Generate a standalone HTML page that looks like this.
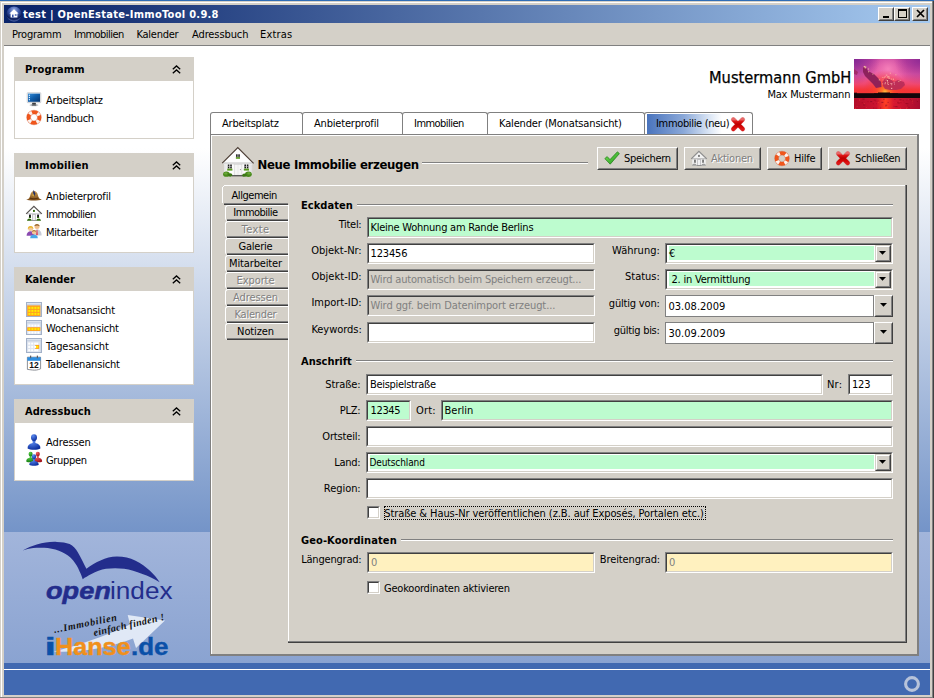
<!DOCTYPE html>
<html lang="de"><head><meta charset="utf-8"><title>test | OpenEstate-ImmoTool 0.9.8</title>
<style>
html,body{margin:0;padding:0;}
body{width:934px;height:698px;overflow:hidden;position:relative;background:#d4d0c8;font-family:"DejaVu Sans Condensed","DejaVu Sans","Liberation Sans",sans-serif;font-stretch:condensed;font-size:11px;}
body div, body span.t, body svg.a{position:absolute;box-sizing:border-box;}
.t{white-space:nowrap;display:block;}
svg{display:block;overflow:visible}
.sunk{border:1px solid;border-color:#808080 #fff #fff #808080;}
.sunk>i{position:absolute;left:0;top:0;right:0;bottom:0;border:1px solid;border-color:#404040 #d4d0c8 #d4d0c8 #404040;display:block}
.btn{background:#d4d0c8;border:1px solid;border-color:#fff #404040 #404040 #fff;}
.b2{border-color:#d4d0c8 #404040 #404040 #d4d0c8}.b2>i{border-color:#fff #808080 #808080 #fff !important}
.btn>i{position:absolute;left:0;top:0;right:0;bottom:0;border:1px solid;border-color:#d4d0c8 #808080 #808080 #d4d0c8;display:block}
</style></head><body>
<div style="left:0px;top:0px;width:934px;height:1px;background:#2f6db5"></div>
<div style="left:1px;top:2px;width:931px;height:1px;background:#fff"></div>
<div style="left:1px;top:2px;width:1px;height:695px;background:#fff"></div>
<div style="left:932px;top:1px;width:1px;height:697px;background:#808080"></div>
<div style="left:933px;top:1px;width:1px;height:697px;background:#404040"></div>
<div style="left:0px;top:697px;width:933px;height:1px;background:#808080"></div>
<div style="left:4px;top:5px;width:926px;height:18px;background:linear-gradient(90deg,#0a246a 0%,#0a246a 3%,#a6caf0 100%)"></div>
<svg class="a" style="left:6px;top:6px" width="16" height="16" viewBox="0 0 16 16"><defs><radialGradient id="g1" cx="50%" cy="25%" r="75%"><stop offset="0" stop-color="#9fb4e6"/><stop offset=".45" stop-color="#3a56a8"/><stop offset=".8" stop-color="#0c1c58"/><stop offset="1" stop-color="#5a74b8"/></radialGradient></defs>
<circle cx="8" cy="8" r="7.6" fill="url(#g1)"/>
<path d="M8 3.2 L12.6 7.6 H11.4 V11.4 H4.6 V7.6 H3.4 Z" fill="#fff"/><rect x="6" y="8.6" width="1.6" height="2.8" fill="#3a56a8"/><rect x="8.8" y="8.3" width="1.8" height="1.4" fill="#3a56a8"/></svg>
<span class="t" id="t1" style="top:8px;font-size:11px;line-height:13px;height:13px;color:#fff;font-weight:bold;letter-spacing:0.292px;left:23px;">test | OpenEstate-ImmoTool 0.9.8</span>
<div class="btn" style="left:878px;top:7px;width:16px;height:14px;"><i></i><svg class="a" style="left:3px;top:1px" width="9" height="9"><rect x="1" y="7" width="6" height="2" fill="#000"/></svg></div>
<div class="btn" style="left:894px;top:7px;width:16px;height:14px;"><i></i><svg class="a" style="left:2px;top:0px" width="11" height="11"><rect x="1.5" y="1.5" width="8" height="8" fill="none" stroke="#000"/><rect x="1" y="1" width="9" height="2" fill="#000"/></svg></div>
<div class="btn" style="left:912px;top:7px;width:16px;height:14px;"><i></i><svg class="a" style="left:3px;top:1px" width="10" height="9"><path d="M1 1 L8 8 M8 1 L1 8" stroke="#000" stroke-width="1.7"/></svg></div>
<div style="left:4px;top:45px;width:926px;height:1px;background:#808080"></div>
<span class="t" id="t2" style="top:28px;font-size:11px;line-height:13px;height:13px;color:#000;letter-spacing:-0.257px;left:12px;">Programm</span>
<span class="t" id="t3" style="top:28px;font-size:11px;line-height:13px;height:13px;color:#000;letter-spacing:-0.536px;left:74px;">Immobilien</span>
<span class="t" id="t4" style="top:28px;font-size:11px;line-height:13px;height:13px;color:#000;letter-spacing:-0.265px;left:136.5px;">Kalender</span>
<span class="t" id="t5" style="top:28px;font-size:11px;line-height:13px;height:13px;color:#000;letter-spacing:-0.106px;left:192px;">Adressbuch</span>
<span class="t" id="t6" style="top:28px;font-size:11px;line-height:13px;height:13px;color:#000;letter-spacing:0.170px;left:260px;">Extras</span>
<div style="left:4px;top:46px;width:926px;height:486px;background:linear-gradient(180deg,#ffffff 0%,#ffffff 21%,#7494c8 100%)"></div>
<div style="left:4px;top:532px;width:926px;height:131px;background:linear-gradient(180deg,#a2b5db 0%,#8aa3d1 100%)"></div>
<div style="left:4px;top:663px;width:926px;height:6px;background:#4169b1"></div>
<div style="left:4px;top:669px;width:926px;height:1px;background:#fff"></div>
<div style="left:4px;top:670px;width:926px;height:25px;background:#4169b1"></div>
<svg class="a" style="left:904px;top:676px" width="16" height="16" viewBox="0 0 16 16"><circle cx="8" cy="8" r="6.4" fill="none" stroke="#b7c3da" stroke-width="3.1"/></svg>
<div style="left:14px;top:57px;width:180px;height:24px;background:#d4d0c8"></div>
<span class="t" id="t7" style="top:63px;font-size:11px;line-height:13px;height:13px;color:#000;font-weight:bold;letter-spacing:0.200px;left:25px;">Programm</span>
<svg class="a" style="left:172px;top:65px" width="9" height="9" viewBox="0 0 9 9"><path d="M.8 4.2 L4.5 .9 L8.2 4.2 M.8 8.2 L4.5 4.9 L8.2 8.2" fill="none" stroke="#000" stroke-width="1.3"/></svg>
<div style="left:14px;top:81px;width:180px;height:58px;background:#fff;border:1px solid #d4d0c8;border-top:0"></div>
<svg class="a" style="left:26px;top:91px" width="16" height="16" viewBox="0 0 16 16"><defs><linearGradient id="g3" x1="0" y1="0" x2="1" y2="1"><stop offset="0" stop-color="#3a8fd8"/><stop offset=".45" stop-color="#1060ae"/><stop offset="1" stop-color="#06346e"/></linearGradient></defs>
<g transform="translate(0 .7)"><rect x="1.2" y="1" width="13.6" height="10" rx=".6" fill="#eef0f3" stroke="#a4aab2" stroke-width=".5"/>
<rect x="2" y="1.9" width="12" height="8.2" fill="url(#g3)"/>
<rect x="2.8" y="3" width="1.2" height="1.2" fill="#dfefff"/><rect x="2.8" y="5.2" width="1.2" height="1.2" fill="#dfefff"/><rect x="2.8" y="7.4" width="1.2" height="1.2" fill="#dfefff"/>
<path d="M6.4 11 H9.6 L10.2 12.8 H5.8 Z" fill="#3a3c40"/><ellipse cx="8" cy="13.5" rx="4.4" ry="1.1" fill="#c8ccd0"/><ellipse cx="8" cy="13.2" rx="2.6" ry=".7" fill="#2c2e32"/></g></svg>
<span class="t" id="t8" style="top:94px;font-size:11px;line-height:13px;height:13px;color:#000;letter-spacing:-0.198px;left:46px;">Arbeitsplatz</span>
<svg class="a" style="left:26px;top:109px" width="16" height="16" viewBox="0 0 16 16"><circle cx="8" cy="8.5" r="5.4" fill="none" stroke="#f0561c" stroke-width="3.9"/>
<circle cx="8" cy="8.5" r="5.4" fill="none" stroke="#fdf3ee" stroke-width="3.9" stroke-dasharray="2.9 5.58" stroke-dashoffset="-2.8"/>
<circle cx="8" cy="8.5" r="7.35" fill="none" stroke="#c8431a" stroke-width=".5" opacity=".55"/>
<circle cx="8" cy="8.5" r="3.45" fill="none" stroke="#c8431a" stroke-width=".5" opacity=".55"/></svg>
<span class="t" id="t9" style="top:112px;font-size:11px;line-height:13px;height:13px;color:#000;letter-spacing:-0.318px;left:46px;">Handbuch</span>
<div style="left:14px;top:153px;width:180px;height:24px;background:#d4d0c8"></div>
<span class="t" id="t10" style="top:159px;font-size:11px;line-height:13px;height:13px;color:#000;font-weight:bold;letter-spacing:0.167px;left:25px;">Immobilien</span>
<svg class="a" style="left:172px;top:161px" width="9" height="9" viewBox="0 0 9 9"><path d="M.8 4.2 L4.5 .9 L8.2 4.2 M.8 8.2 L4.5 4.9 L8.2 8.2" fill="none" stroke="#000" stroke-width="1.3"/></svg>
<div style="left:14px;top:177px;width:180px;height:76px;background:#fff;border:1px solid #d4d0c8;border-top:0"></div>
<svg class="a" style="left:26px;top:187px" width="16" height="16" viewBox="0 0 16 16"><defs><linearGradient id="g4" x1="0" y1="0" x2="0" y2="1"><stop offset="0" stop-color="#c99a52"/><stop offset="1" stop-color="#7a4a16"/></linearGradient></defs>
<path d="M.2 12.6 C3 12.2 3.6 10.6 4.2 8.4 C4.8 5.8 6 4 8 4 C10.2 4 11.4 5.8 12 8.4 C12.6 10.6 13.2 12.2 15.9 12.4 C13 13.8 3 14 .2 12.6 Z" fill="url(#g4)"/>
<path d="M4.2 10.6 C6.6 11.4 9.6 11.4 12.2 10.4 L12.6 11.6 C9.8 12.6 6.4 12.6 3.8 11.8 Z" fill="#5a3410"/>
<path d="M7.6 2.8 L9.4 6.8 L8 9.6 L7 6.4 Z" fill="#1c2c6c"/><path d="M7.2 6 L8 9.4 L6.4 8.4 Z" fill="#e8c040"/></svg>
<span class="t" id="t11" style="top:190px;font-size:11px;line-height:13px;height:13px;color:#000;letter-spacing:-0.183px;left:46px;">Anbieterprofil</span>
<svg class="a" style="left:26px;top:205px" width="16" height="16" viewBox="0 0 16 16"><path d="M7.9 1.6 L15 8.7 H.8 Z" fill="#ffffff"/><rect x="1.3" y="8.7" width="13.4" height="7" fill="#ffffff"/>
<rect x="1" y="8.3" width="14" height="1" fill="#c4c4c8"/>
<path d="M.2 8.9 L7.9 1.3 L15.8 8.9" fill="none" stroke="#585452" stroke-width="1.25"/>
<rect x="7" y="4.9" width="1.9" height="2" fill="#2f6a0c"/>
<rect x="3" y="9.6" width="1.9" height="2.4" fill="#18181c"/><rect x="2.9" y="12" width="2.1" height="1.1" fill="#2f6a0c"/>
<rect x="11.1" y="9.6" width="1.9" height="2.4" fill="#18181c"/><rect x="11" y="12" width="2.1" height="1.1" fill="#2f6a0c"/>
<rect x="6.4" y="9.7" width="3.3" height="5.6" fill="#f0f0f2" stroke="#a8a8ac" stroke-width=".6"/>
<path d="M1 15.7 C1.2 13.6 3.4 13.3 4.4 14 C5 14 5.6 14.6 5.8 15.7 Z M10.2 15.7 C10.4 14.6 11 14 11.6 14 C12.6 13.3 14.8 13.6 15 15.7 Z" fill="#2f6a0c"/>
<rect x="5.6" y="15.3" width="5" height=".6" fill="#707070"/></svg>
<span class="t" id="t12" style="top:208px;font-size:11px;line-height:13px;height:13px;color:#000;letter-spacing:-0.536px;left:46px;">Immobilien</span>
<svg class="a" style="left:26px;top:223px" width="16" height="16" viewBox="0 0 16 16"><circle cx="11" cy="3.6" r="2.5" fill="#f0c090"/><path d="M8.4 3 C8.6 .8 13.4 .8 13.6 3.2 C12.6 2.2 9.6 2.2 8.4 3 Z" fill="#8a5a20"/>
<path d="M7.4 12.6 C7.4 8.6 8.8 6.6 11 6.6 C13.6 6.6 15.6 8.4 15.6 12.6 Z" fill="#c8ccd8"/><path d="M10.6 6.8 L11.4 6.8 L11.8 11.4 L11 12.4 L10.2 11.4 Z" fill="#e04050"/>
<circle cx="4.6" cy="5.4" r="2.5" fill="#f4c898"/><path d="M1.8 6.4 C1.4 2 7.6 2 7.4 6.2 C6.6 4.2 3 4 1.8 6.4 Z" fill="#e8b830"/>
<path d="M.6 12.8 C.6 9.8 2.4 8.2 4.6 8.2 C6.8 8.2 8.4 9.8 8.4 12.8 Z" fill="#8a4ab0"/>
<circle cx="8" cy="9.4" r="2.1" fill="#f4c898"/><path d="M5.8 9.2 C6 6.4 10 6.4 10.2 9.2 C9.4 8 6.8 8 5.8 9.2 Z" fill="#b07830"/>
<path d="M4.2 15.2 C4.2 12.8 5.8 11.8 8 11.8 C10.2 11.8 11.8 12.8 11.8 15.2 Z" fill="#48a8e8"/></svg>
<span class="t" id="t13" style="top:226px;font-size:11px;line-height:13px;height:13px;color:#000;letter-spacing:-0.243px;left:46px;">Mitarbeiter</span>
<div style="left:14px;top:267px;width:180px;height:24px;background:#d4d0c8"></div>
<span class="t" id="t14" style="top:273px;font-size:11px;line-height:13px;height:13px;color:#000;font-weight:bold;letter-spacing:-0.048px;left:25px;">Kalender</span>
<svg class="a" style="left:172px;top:275px" width="9" height="9" viewBox="0 0 9 9"><path d="M.8 4.2 L4.5 .9 L8.2 4.2 M.8 8.2 L4.5 4.9 L8.2 8.2" fill="none" stroke="#000" stroke-width="1.3"/></svg>
<div style="left:14px;top:291px;width:180px;height:94px;background:#fff;border:1px solid #d4d0c8;border-top:0"></div>
<svg class="a" style="left:26px;top:301px" width="16" height="16" viewBox="0 0 16 16"><rect x=".5" y="1.5" width="15" height="14" fill="#c9d3e3" stroke="#a3b1c8" stroke-width="1"/><rect x="1" y="2" width="14" height="1" fill="#dde4ef"/><rect x="1.2" y="4.4" width="13.2" height="10.6" fill="#ffa020"/><rect x="2.4" y="5.9" width="2" height="2" fill="#ffee00"/><rect x="5.4" y="5.9" width="2" height="2" fill="#ffee00"/><rect x="8.4" y="5.9" width="2" height="2" fill="#ffee00"/><rect x="11.4" y="5.9" width="2" height="2" fill="#ffee00"/><rect x="2.4" y="8.9" width="2" height="2" fill="#ffee00"/><rect x="5.4" y="8.9" width="2" height="2" fill="#ffee00"/><rect x="8.4" y="8.9" width="2" height="2" fill="#ffee00"/><rect x="11.4" y="8.9" width="2" height="2" fill="#ffee00"/><rect x="2.4" y="11.9" width="2" height="2" fill="#ffee00"/><rect x="5.4" y="11.9" width="2" height="2" fill="#ffee00"/><rect x="8.4" y="11.9" width="2" height="2" fill="#ffee00"/><rect x="11.4" y="11.9" width="2" height="2" fill="#ffee00"/></svg>
<span class="t" id="t15" style="top:304px;font-size:11px;line-height:13px;height:13px;color:#000;letter-spacing:-0.232px;left:46px;">Monatsansicht</span>
<svg class="a" style="left:26px;top:319px" width="16" height="16" viewBox="0 0 16 16"><rect x=".5" y="1.5" width="15" height="14" fill="#c9d3e3" stroke="#a3b1c8" stroke-width="1"/><rect x="1" y="2" width="14" height="1" fill="#dde4ef"/><rect x="1.2" y="4.4" width="13.2" height="10.6" fill="#dfe5f0"/><rect x="1.2" y="8.2" width="13.2" height="3.8" fill="#ffa020"/><rect x="2.4" y="5.6" width="2" height="2" fill="#ffffff"/><rect x="5.4" y="5.6" width="2" height="2" fill="#ffffff"/><rect x="8.4" y="5.6" width="2" height="2" fill="#ffffff"/><rect x="11.4" y="5.6" width="2" height="2" fill="#ffffff"/><rect x="2.4" y="9.1" width="2" height="2" fill="#ffee00"/><rect x="5.4" y="9.1" width="2" height="2" fill="#ffee00"/><rect x="8.4" y="9.1" width="2" height="2" fill="#ffee00"/><rect x="11.4" y="9.1" width="2" height="2" fill="#ffee00"/><rect x="2.4" y="12.6" width="2" height="2" fill="#ffffff"/><rect x="5.4" y="12.6" width="2" height="2" fill="#ffffff"/><rect x="8.4" y="12.6" width="2" height="2" fill="#ffffff"/><rect x="11.4" y="12.6" width="2" height="2" fill="#ffffff"/></svg>
<span class="t" id="t16" style="top:322px;font-size:11px;line-height:13px;height:13px;color:#000;letter-spacing:-0.178px;left:46px;">Wochenansicht</span>
<svg class="a" style="left:26px;top:337px" width="16" height="16" viewBox="0 0 16 16"><rect x=".5" y="1.5" width="15" height="14" fill="#c9d3e3" stroke="#a3b1c8" stroke-width="1"/><rect x="1" y="2" width="14" height="1" fill="#dde4ef"/><rect x="1.2" y="4.4" width="13.2" height="10.6" fill="#dfe5f0"/><rect x="9.2" y="7.9" width="4" height="4" fill="#ffa020"/><rect x="2.2" y="5.6" width="2" height="2" fill="#ffffff"/><rect x="5.2" y="5.6" width="2" height="2" fill="#ffffff"/><rect x="8.2" y="5.6" width="2" height="2" fill="#ffffff"/><rect x="10.2" y="5.6" width="2" height="2" fill="#ffffff"/><rect x="2.2" y="8.899999999999999" width="2" height="2" fill="#ffffff"/><rect x="5.2" y="8.899999999999999" width="2" height="2" fill="#ffffff"/><rect x="8.2" y="8.899999999999999" width="2" height="2" fill="#ffffff"/><rect x="10.2" y="8.9" width="2" height="2" fill="#ffee00"/><rect x="2.2" y="12.2" width="2" height="2" fill="#ffffff"/><rect x="5.2" y="12.2" width="2" height="2" fill="#ffffff"/><rect x="8.2" y="12.2" width="2" height="2" fill="#ffffff"/><rect x="10.2" y="12.2" width="2" height="2" fill="#ffffff"/></svg>
<span class="t" id="t17" style="top:340px;font-size:11px;line-height:13px;height:13px;color:#000;letter-spacing:-0.071px;left:46px;">Tagesansicht</span>
<svg class="a" style="left:26px;top:355px" width="16" height="16" viewBox="0 0 16 16"><path d="M1.4 2.2 H14.6 V13.8 C12 15 9 15.4 6.4 15 L1.4 14.4 Z" fill="#fff" stroke="#70747c" stroke-width=".8"/>
<rect x="1.4" y="2.2" width="13.2" height="3.6" fill="#2f8ee0"/><rect x="4" y=".6" width="1.2" height="2.6" fill="#5a5e66"/><rect x="10.8" y=".6" width="1.2" height="2.6" fill="#5a5e66"/>
<text x="8" y="13.2" font-size="8.5" font-weight="bold" font-family="Liberation Sans,sans-serif" text-anchor="middle" fill="#111">12</text></svg>
<span class="t" id="t18" style="top:358px;font-size:11px;line-height:13px;height:13px;color:#000;letter-spacing:-0.172px;left:46px;">Tabellenansicht</span>
<div style="left:14px;top:399px;width:180px;height:24px;background:#d4d0c8"></div>
<span class="t" id="t19" style="top:405px;font-size:11px;line-height:13px;height:13px;color:#000;font-weight:bold;letter-spacing:0.063px;left:25px;">Adressbuch</span>
<svg class="a" style="left:172px;top:407px" width="9" height="9" viewBox="0 0 9 9"><path d="M.8 4.2 L4.5 .9 L8.2 4.2 M.8 8.2 L4.5 4.9 L8.2 8.2" fill="none" stroke="#000" stroke-width="1.3"/></svg>
<div style="left:14px;top:423px;width:180px;height:58px;background:#fff;border:1px solid #d4d0c8;border-top:0"></div>
<svg class="a" style="left:26px;top:433px" width="16" height="16" viewBox="0 0 16 16"><defs><radialGradient id="g5" cx="35%" cy="25%" r="80%"><stop offset="0" stop-color="#5a8af0"/><stop offset="1" stop-color="#0a2c9c"/></radialGradient></defs>
<path d="M6.4 6.6 L6.7 10.1 C3.0 10.8 1.4000000000000004 13.0 1.5999999999999996 15.4 C4.0 17.2 12.0 17.2 14.4 15.4 C14.6 13.0 13.0 10.8 9.3 10.1 L9.6 6.6 Z" fill="url(#g5)"/>
<ellipse cx="8" cy="4.6" rx="3.0" ry="3.3600000000000003" fill="url(#g5)"/></svg>
<span class="t" id="t20" style="top:436px;font-size:11px;line-height:13px;height:13px;color:#000;letter-spacing:-0.082px;left:46px;">Adressen</span>
<svg class="a" style="left:26px;top:451px" width="16" height="16" viewBox="0 0 16 16"><defs><radialGradient id="g6" cx="35%" cy="25%" r="80%"><stop offset="0" stop-color="#58d048"/><stop offset="1" stop-color="#127a10"/></radialGradient></defs>
<path d="M3.5119999999999996 4.4 L3.7159999999999993 6.78 C1.1999999999999993 7.256 0.11199999999999921 8.752 0.24799999999999933 10.384 C1.8799999999999994 11.608 7.32 11.608 8.952 10.384 C9.088000000000001 8.752 8.0 7.256 5.484 6.78 L5.688 4.4 Z" fill="url(#g6)"/>
<ellipse cx="4.6" cy="3.04" rx="2.04" ry="2.2848" fill="url(#g6)"/><defs><radialGradient id="g7" cx="35%" cy="25%" r="80%"><stop offset="0" stop-color="#f06060"/><stop offset="1" stop-color="#a01018"/></radialGradient></defs>
<path d="M10.712 4.4 L10.916 6.78 C8.4 7.256 7.312 8.752 7.448 10.384 C9.08 11.608 14.520000000000001 11.608 16.152 10.384 C16.288 8.752 15.200000000000001 7.256 12.684000000000001 6.78 L12.888000000000002 4.4 Z" fill="url(#g7)"/>
<ellipse cx="11.8" cy="3.04" rx="2.04" ry="2.2848" fill="url(#g7)"/><defs><radialGradient id="g8" cx="35%" cy="25%" r="80%"><stop offset="0" stop-color="#5a8af0"/><stop offset="1" stop-color="#0a2c9c"/></radialGradient></defs>
<path d="M6.816 7.300000000000001 L7.038 9.89 C4.3 10.408000000000001 3.1160000000000005 12.036000000000001 3.2640000000000002 13.812000000000001 C5.04 15.144 10.96 15.144 12.736 13.812000000000001 C12.884 12.036000000000001 11.7 10.408000000000001 8.962 9.89 L9.184 7.300000000000001 Z" fill="url(#g8)"/>
<ellipse cx="8" cy="5.82" rx="2.2199999999999998" ry="2.4864" fill="url(#g8)"/></svg>
<span class="t" id="t21" style="top:454px;font-size:11px;line-height:13px;height:13px;color:#000;letter-spacing:-0.308px;left:46px;">Gruppen</span>
<svg class="a" style="left:14px;top:536px" width="180" height="125" viewBox="0 0 180 125"><path d="M8.6 14.5 C13 12 18 9.8 22.8 8.5 C30 6.5 36 5.6 42.9 5.9 C48 6 52 6.6 55.6 8.1 C59 10 62 13 63.8 16.3 C67 22 70 28 72.4 32.7 C77 29 82 26.5 86.5 24.5 C92 22 97 20.6 102.9 20.5 C110 20.5 116 22 121.1 24.5 C127 27.5 132 31 135.7 34.5 C140 38.5 143 42 145.7 46.3 C140 43 134 40 128.4 38.1 C122 35.5 116 33.5 110.2 32.7 C104 32 98 32 92 32.7 C87 33.5 82 35.5 77.4 38.1 C74 40 71 41.5 68.7 43.2 C68 41 67 38 65.6 35.4 C64 31.5 62 28 59.2 24.5 C56 20.5 52 18 48.3 16.3 C44 14 39 12.8 33.8 12.1 C29 11.6 24 11.6 19.2 12.1 C15 12.6 12 13.4 8.6 14.5 Z" fill="#232d8c"/>
<path d="M39.5 115.5 C60 111 90 100.5 116 88.5 L113.7 79 L151 84.5 L122 112 L119 102.5 C95 112 65 117 39.5 115.5 Z" fill="#e9f0f9" opacity=".9"/>
</svg>
<span class="t" id="t22" style="top:-6px;font-size:23px;line-height:26px;height:26px;color:#232d8c;font-weight:bold;transform-origin:0 50%;transform:scaleX(1.1829);left:0px;top:578px;left:45.5px;font-style:italic;-webkit-text-stroke:.5px #232d8c;font-family:Liberation Sans,sans-serif;">open</span>
<span class="t" id="t23" style="top:-6px;font-size:23px;line-height:26px;height:26px;color:#232d8c;transform-origin:0 50%;transform:scaleX(1.1367);left:0px;top:578px;left:109.8px;font-family:Liberation Sans,sans-serif;">index</span>
<span class="t" id="t24" style="top:-6px;font-size:23px;line-height:26px;height:26px;color:#0a50a8;font-weight:bold;transform-origin:0 50%;transform:scaleX(1.6429);left:0px;top:634px;left:44.5px;-webkit-text-stroke:.6px #0a50a8;font-family:Liberation Sans,sans-serif;">i</span>
<span class="t" id="t25" style="top:-6px;font-size:23px;line-height:26px;height:26px;color:#f0901c;font-weight:bold;transform-origin:0 50%;transform:scaleX(1.0935);left:0px;top:634px;left:55px;-webkit-text-stroke:.4px #f0901c;font-family:Liberation Sans,sans-serif;">Hanse</span>
<span class="t" id="t26" style="top:-6px;font-size:23px;line-height:26px;height:26px;color:#0a50a8;font-weight:bold;transform-origin:0 50%;transform:scaleX(1.1284);left:0px;top:634px;left:130.5px;-webkit-text-stroke:.4px #0a50a8;font-family:Liberation Sans,sans-serif;">.de</span>
<span class="t" id="t27" style="top:-2px;font-size:10px;line-height:12px;height:12px;color:#111;font-weight:bold;letter-spacing:0.731px;left:0px;top:624px;left:55px;transform:rotate(-11.5deg);font-style:italic;font-family:Liberation Serif,serif;transform-origin:0 100%;">...Immobilien</span>
<span class="t" id="t28" style="top:-2px;font-size:10px;line-height:12px;height:12px;color:#111;font-weight:bold;letter-spacing:0.383px;left:0px;top:627px;left:95px;transform:rotate(-13deg);font-style:italic;font-family:Liberation Serif,serif;transform-origin:0 100%;">einfach finden !</span>
<span class="t" id="t29" style="top:69px;font-size:15px;line-height:18px;height:18px;color:#000;transform-origin:0 50%;transform:scaleX(1.0834);left:708.7px;-webkit-text-stroke:.25px #000;">Mustermann GmbH</span>
<span class="t" id="t30" style="top:88px;font-size:11px;line-height:13px;height:13px;color:#000;letter-spacing:-0.205px;right:83.805px;">Max Mustermann</span>
<svg class="a" style="left:854px;top:59px" width="66" height="50" viewBox="0 0 66 50"><defs>
<linearGradient id="sk" x1="0" y1="0" x2="0" y2="1"><stop offset="0" stop-color="#c0409e"/><stop offset=".3" stop-color="#ea5ca4"/><stop offset=".5" stop-color="#f04870"/><stop offset=".62" stop-color="#f53538"/><stop offset="1" stop-color="#f03028"/></linearGradient>
<radialGradient id="sun" gradientUnits="userSpaceOnUse" cx="31" cy="33" r="22"><stop offset="0" stop-color="#ffc040"/><stop offset=".14" stop-color="#ff7a28"/><stop offset=".4" stop-color="#ff4828" stop-opacity=".75"/><stop offset="1" stop-color="#f03030" stop-opacity="0"/></radialGradient>
<radialGradient id="ray" gradientUnits="userSpaceOnUse" cx="34" cy="10" r="20"><stop offset="0" stop-color="#f884bc" stop-opacity=".9"/><stop offset="1" stop-color="#f070b0" stop-opacity="0"/></radialGradient>
<radialGradient id="cor" gradientUnits="userSpaceOnUse" cx="0" cy="0" r="26"><stop offset="0" stop-color="#7a2492" stop-opacity=".9"/><stop offset="1" stop-color="#7a2492" stop-opacity="0"/></radialGradient><radialGradient id="cor2" gradientUnits="userSpaceOnUse" cx="66" cy="0" r="26"><stop offset="0" stop-color="#8a2894" stop-opacity=".9"/><stop offset="1" stop-color="#8a2894" stop-opacity="0"/></radialGradient>
<linearGradient id="wt" x1="0" y1="0" x2="1" y2="0"><stop offset="0" stop-color="#b40e2a"/><stop offset=".34" stop-color="#cc1430"/><stop offset=".48" stop-color="#ff4024"/><stop offset=".6" stop-color="#d81830"/><stop offset="1" stop-color="#a80c30"/></linearGradient>
</defs>
<rect width="66" height="50" fill="url(#sk)"/><rect width="66" height="34" fill="url(#ray)"/><rect width="66" height="34" fill="url(#cor)"/><rect width="66" height="34" fill="url(#cor2)"/><rect width="66" height="40" fill="url(#sun)"/>
<path d="M9 8 L12 8.5 L14 12 L20 15 L24 19 L27 23 L27.5 28 L22 29 L19 25 L15 21 L11 17 L9 13 Z" fill="#8a2058" opacity=".95"/>
<path d="M28.5 23 L31 19.5 L36 20 L40 23 L44 21 L50 23 L51 26 L47 30 L42 31 L36 31 L31 30 L29 27 Z" fill="#b42a58" opacity=".85"/>
<path d="M0 10 L4 13 L3 16 L0 15 Z" fill="#a02860" opacity=".85"/>
<rect x="32.5" y="15.7" width="1" height="1" fill="#ffc0b0" opacity="0.53"/><rect x="36.7" y="19.6" width="1" height="1" fill="#ffc0b0" opacity="0.91"/><rect x="34.4" y="17.3" width="1" height="1" fill="#ffe8c0" opacity="0.69"/><rect x="30.5" y="24.3" width="1" height="1" fill="#ffc0b0" opacity="0.76"/><rect x="31.8" y="15.6" width="1" height="1" fill="#ffc0b0" opacity="0.76"/><rect x="37.2" y="25.3" width="1" height="1" fill="#ffc0b0" opacity="0.76"/><rect x="38.8" y="19.7" width="1" height="1" fill="#ffe8c0" opacity="0.82"/><rect x="37.3" y="24.1" width="1" height="1" fill="#ffb4c0" opacity="0.81"/><rect x="34.6" y="18.7" width="1" height="1" fill="#ffe8c0" opacity="0.92"/><rect x="33.2" y="17.5" width="1" height="1" fill="#ffd8a0" opacity="0.81"/><rect x="30.9" y="23.3" width="1" height="1" fill="#ffe8c0" opacity="0.72"/><rect x="32.9" y="21.1" width="1" height="1" fill="#ffe8c0" opacity="0.94"/><rect x="28.4" y="20.5" width="1" height="1" fill="#ff9a90" opacity="0.57"/><rect x="35.8" y="13.7" width="1" height="1" fill="#ffc0b0" opacity="0.84"/><rect x="37.5" y="28.8" width="1" height="1" fill="#ff9a90" opacity="0.65"/><rect x="33.0" y="21.9" width="1" height="1" fill="#ffb4c0" opacity="0.53"/><rect x="27.9" y="17.9" width="1" height="1" fill="#ffc0b0" opacity="0.53"/><rect x="40.0" y="24.6" width="1" height="1" fill="#ffb4c0" opacity="0.63"/><rect x="33.7" y="25.0" width="1" height="1" fill="#ffc0b0" opacity="0.92"/><rect x="33.1" y="24.0" width="1" height="1" fill="#ffb4c0" opacity="0.53"/><rect x="41.4" y="15.3" width="1" height="1" fill="#ffd8a0" opacity="0.68"/><rect x="44.3" y="21.9" width="1" height="1" fill="#ffd8a0" opacity="0.70"/><rect x="37.0" y="28.9" width="1" height="1" fill="#ffb4c0" opacity="0.89"/><rect x="31.6" y="20.5" width="1" height="1" fill="#ff9a90" opacity="0.81"/><rect x="33.6" y="17.2" width="1" height="1" fill="#ffc0b0" opacity="0.58"/><rect x="30.6" y="17.2" width="1" height="1" fill="#ffb4c0" opacity="0.87"/><rect x="29.6" y="18.1" width="1" height="1" fill="#ffd8a0" opacity="0.69"/><rect x="33.4" y="23.2" width="1" height="1" fill="#ffd8a0" opacity="0.81"/><rect x="36.3" y="24.1" width="1" height="1" fill="#ffc0b0" opacity="0.71"/><rect x="39.6" y="23.1" width="1" height="1" fill="#ffb4c0" opacity="0.68"/><rect x="28.1" y="24.4" width="1" height="1" fill="#ffc0b0" opacity="0.59"/><rect x="45.7" y="20.9" width="1" height="1" fill="#ffc0b0" opacity="0.65"/><rect x="10.6" y="8.3" width="1" height="1" fill="#ffd0a0" opacity=".85"/><rect x="10.2" y="7.1" width="1" height="1" fill="#ffd0a0" opacity=".85"/><rect x="10.9" y="8.3" width="1" height="1" fill="#ffd0a0" opacity=".85"/><rect x="14.1" y="12.3" width="1" height="1" fill="#ffd0a0" opacity=".85"/><rect x="24.8" y="20.4" width="1" height="1" fill="#ffd0a0" opacity=".85"/><rect x="9.6" y="7.4" width="1" height="1" fill="#ffd0a0" opacity=".85"/><rect x="13.9" y="9.5" width="1" height="1" fill="#ffd0a0" opacity=".85"/><rect x="10.3" y="6.9" width="1" height="1" fill="#ffd0a0" opacity=".85"/><rect x="11.4" y="7.6" width="1" height="1" fill="#ffd0a0" opacity=".85"/><rect x="18.4" y="14.6" width="1" height="1" fill="#ffd0a0" opacity=".85"/>
<rect y="34.2" width="66" height="5" fill="#12050a"/><rect x="24" y="33.5" width="12" height="1.4" fill="#12050a"/><rect x="0" y="33.7" width="3" height="1" fill="#12050a"/><rect x="20" y="34" width="24" height=".6" fill="#12050a"/>
<rect y="39.2" width="66" height="10.8" fill="url(#wt)"/><rect x="45.3" y="42.0" width="1" height="1" fill="#e02838" opacity=".6"/><rect x="23.1" y="41.6" width="2" height="1" fill="#b00c28" opacity=".6"/><rect x="21.4" y="41.6" width="1" height="1" fill="#96081e" opacity=".6"/><rect x="53.2" y="46.5" width="1" height="1" fill="#96081e" opacity=".6"/><rect x="33.6" y="42.9" width="1" height="1" fill="#7a0820" opacity=".6"/><rect x="51.4" y="44.0" width="2" height="1" fill="#96081e" opacity=".6"/><rect x="39.3" y="42.8" width="1" height="1" fill="#e02838" opacity=".6"/><rect x="5.2" y="40.5" width="1" height="1" fill="#ff4a38" opacity=".6"/><rect x="22.0" y="44.1" width="1" height="1" fill="#b00c28" opacity=".6"/><rect x="31.2" y="45.7" width="2" height="1" fill="#7a0820" opacity=".6"/><rect x="7.8" y="43.2" width="1" height="1" fill="#96081e" opacity=".6"/><rect x="57.8" y="43.6" width="1" height="1" fill="#e02838" opacity=".6"/><rect x="52.1" y="48.7" width="1" height="1" fill="#ff4a38" opacity=".6"/><rect x="26.1" y="48.5" width="1" height="1" fill="#96081e" opacity=".6"/><rect x="64.6" y="39.8" width="1" height="1" fill="#b00c28" opacity=".6"/><rect x="52.4" y="40.9" width="1" height="1" fill="#b00c28" opacity=".6"/><rect x="42.7" y="42.8" width="2" height="1" fill="#b00c28" opacity=".6"/><rect x="8.5" y="39.6" width="2" height="1" fill="#7a0820" opacity=".6"/><rect x="48.7" y="40.8" width="1" height="1" fill="#96081e" opacity=".6"/><rect x="1.8" y="41.5" width="1" height="1" fill="#b00c28" opacity=".6"/><rect x="49.6" y="42.6" width="1" height="1" fill="#b00c28" opacity=".6"/><rect x="54.2" y="40.1" width="1" height="1" fill="#e02838" opacity=".6"/><rect x="43.1" y="47.2" width="1" height="1" fill="#b00c28" opacity=".6"/><rect x="53.8" y="47.8" width="2" height="1" fill="#96081e" opacity=".6"/><rect x="9.9" y="44.4" width="1" height="1" fill="#ff4a38" opacity=".6"/><rect x="39.6" y="46.9" width="1" height="1" fill="#96081e" opacity=".6"/><rect x="9.2" y="45.4" width="2" height="1" fill="#7a0820" opacity=".6"/><rect x="4.0" y="46.0" width="2" height="1" fill="#b00c28" opacity=".6"/><rect x="31.4" y="46.9" width="1" height="1" fill="#b00c28" opacity=".6"/><rect x="16.2" y="42.1" width="2" height="1" fill="#7a0820" opacity=".6"/><rect x="29.4" y="39.8" width="1" height="1" fill="#7a0820" opacity=".6"/><rect x="21.2" y="48.7" width="2" height="1" fill="#b00c28" opacity=".6"/><rect x="13.0" y="42.1" width="2" height="1" fill="#b00c28" opacity=".6"/><rect x="52.5" y="44.3" width="2" height="1" fill="#96081e" opacity=".6"/><rect x="34.0" y="47.8" width="2" height="1" fill="#e02838" opacity=".6"/><rect x="58.0" y="41.4" width="1" height="1" fill="#ff4a38" opacity=".6"/><rect x="27.1" y="43.2" width="1" height="1" fill="#e02838" opacity=".6"/><rect x="43.6" y="43.6" width="2" height="1" fill="#96081e" opacity=".6"/><rect x="19.7" y="40.7" width="2" height="1" fill="#96081e" opacity=".6"/><rect x="41.8" y="43.0" width="1" height="1" fill="#e02838" opacity=".6"/><rect x="62.9" y="41.6" width="1" height="1" fill="#7a0820" opacity=".6"/><rect x="57.5" y="41.0" width="1" height="1" fill="#96081e" opacity=".6"/><rect x="45.9" y="48.9" width="1" height="1" fill="#ff4a38" opacity=".6"/><rect x="27.4" y="42.9" width="2" height="1" fill="#7a0820" opacity=".6"/><rect x="23.8" y="42.7" width="1" height="1" fill="#ff4a38" opacity=".6"/><rect x="45.7" y="43.2" width="2" height="1" fill="#b00c28" opacity=".6"/><rect x="19.2" y="48.6" width="1" height="1" fill="#7a0820" opacity=".6"/><rect x="63.2" y="40.5" width="1" height="1" fill="#e02838" opacity=".6"/><rect x="2.6" y="46.9" width="1" height="1" fill="#e02838" opacity=".6"/><rect x="53.3" y="47.6" width="1" height="1" fill="#e02838" opacity=".6"/><rect x="9.7" y="48.2" width="1" height="1" fill="#b00c28" opacity=".6"/><rect x="45.5" y="40.3" width="2" height="1" fill="#7a0820" opacity=".6"/><rect x="11.9" y="48.0" width="1" height="1" fill="#e02838" opacity=".6"/><rect x="41.2" y="47.1" width="2" height="1" fill="#7a0820" opacity=".6"/><rect x="55.7" y="40.1" width="1" height="1" fill="#7a0820" opacity=".6"/><rect x="0.8" y="48.9" width="1" height="1" fill="#ff4a38" opacity=".6"/><rect x="40.4" y="39.9" width="1" height="1" fill="#96081e" opacity=".6"/><rect x="63.0" y="42.0" width="1" height="1" fill="#96081e" opacity=".6"/><rect x="60.6" y="45.5" width="1" height="1" fill="#b00c28" opacity=".6"/><rect x="18.8" y="44.3" width="1" height="1" fill="#96081e" opacity=".6"/></svg>
<div style="left:210px;top:112px;width:93px;height:22px;background:#fff;border:1px solid #808080;border-bottom:0;border-radius:3px 3px 0 0;"></div>
<span class="t" id="t31" style="top:117px;font-size:11px;line-height:13px;height:13px;color:#000;letter-spacing:-0.198px;left:222px;">Arbeitsplatz</span>
<div style="left:302px;top:112px;width:101px;height:22px;background:#fff;border:1px solid #808080;border-bottom:0;border-radius:3px 3px 0 0;"></div>
<span class="t" id="t32" style="top:117px;font-size:11px;line-height:13px;height:13px;color:#000;letter-spacing:-0.183px;left:314px;">Anbieterprofil</span>
<div style="left:402px;top:112px;width:86px;height:22px;background:#fff;border:1px solid #808080;border-bottom:0;border-radius:3px 3px 0 0;"></div>
<span class="t" id="t33" style="top:117px;font-size:11px;line-height:13px;height:13px;color:#000;letter-spacing:-0.536px;left:414px;">Immobilien</span>
<div style="left:487px;top:112px;width:158px;height:22px;background:#fff;border:1px solid #808080;border-bottom:0;border-radius:3px 3px 0 0;"></div>
<span class="t" id="t34" style="top:117px;font-size:11px;line-height:13px;height:13px;color:#000;letter-spacing:-0.158px;left:499px;">Kalender (Monatsansicht)</span>
<div style="left:644px;top:112px;width:109px;height:22px;background:#fff;border:1px solid #808080;border-bottom:0;border-radius:3px 3px 0 0;"><div style="left:2px;top:1px;right:1px;bottom:0;background:linear-gradient(90deg,#4a74bd 0%,#8aa8d8 35%,#dbe6f5 60%,#ffffff 72%)"></div></div>
<span class="t" id="t35" style="top:117px;font-size:11px;line-height:13px;height:13px;color:#000;letter-spacing:-0.339px;left:656px;">Immobilie (neu)</span>
<svg class="a" style="left:730px;top:116px" width="16" height="16" viewBox="0 0 16 16"><defs><linearGradient id="g9" x1="0" y1="0" x2="0" y2="1"><stop offset="0" stop-color="#ff8a8a"/><stop offset=".22" stop-color="#f01818"/><stop offset=".5" stop-color="#c80000"/><stop offset=".8" stop-color="#e80808"/><stop offset="1" stop-color="#f02020"/></linearGradient></defs>
<path d="M3.3 3.5 L12.7 12.9 M12.7 3.5 L3.3 12.9" fill="none" stroke="url(#g9)" stroke-width="4.2" stroke-linecap="round"/>
<path d="M3.3 3.5 L12.7 12.9 M12.7 3.5 L3.3 12.9" fill="none" stroke="#a00000" stroke-opacity=".25" stroke-width="4.9" stroke-linecap="round"/></svg>
<div style="left:210px;top:134px;width:709px;height:522px;background:#d4d0c8;border:1px solid #808080;border-right-width:2px;border-bottom-width:2px;"><div style="left:0;top:0;right:0;height:1px;background:#fff"></div><div style="left:0;top:0;bottom:0;width:1px;background:#fff"></div></div>
<svg class="a" style="left:222px;top:146px" width="32" height="32" viewBox="0 0 32 32"><defs><linearGradient id="g10" x1="0" y1="0" x2="1" y2="0"><stop offset="0" stop-color="#e4e4e4"/><stop offset=".25" stop-color="#ffffff"/><stop offset=".8" stop-color="#fbfbfb"/><stop offset="1" stop-color="#dcdcdc"/></linearGradient></defs>
<path d="M15.8 2.2 L30.4 17 H1.4 Z" fill="#fdfdfd"/>
<rect x="2" y="17" width="28.2" height="12.8" fill="url(#g10)"/>
<rect x="1.2" y="16.2" width="29.6" height="1.8" fill="#d9d9d9"/><rect x="2" y="18" width="28.2" height=".8" fill="#ececec"/>
<path d="M.2 17.2 L15.8 1.5 L31.6 17.3" fill="none" stroke="#4c3e36" stroke-width="1.1" stroke-linejoin="miter"/>
<rect x="13.8" y="8" width="4.3" height="4.8" fill="#f4f4f4"/><rect x="14.1" y="8.3" width="1.5" height="2.6" fill="#1c1c1c"/><rect x="16.3" y="8.3" width="1.5" height="2.6" fill="#1c1c1c"/><rect x="13.9" y="11.1" width="4.1" height="1.7" fill="#5c9a22"/>
<rect x="5.4" y="18.2" width="4.8" height="4.4" fill="#f4f4f4"/><rect x="5.8" y="18.5" width="1.6" height="3.9" fill="#1c1c1c"/><rect x="8.2" y="18.5" width="1.6" height="3.9" fill="#1c1c1c"/><rect x="5.8" y="20.2" width="4" height=".5" fill="#d8d8d8"/><rect x="5.2" y="22.6" width="5.2" height="2" fill="#5c9a22"/>
<rect x="22" y="18.2" width="4.8" height="4.4" fill="#f4f4f4"/><rect x="22.4" y="18.5" width="1.6" height="3.9" fill="#1c1c1c"/><rect x="24.8" y="18.5" width="1.6" height="3.9" fill="#1c1c1c"/><rect x="22.4" y="20.2" width="4" height=".5" fill="#d8d8d8"/><rect x="21.8" y="22.6" width="5.2" height="2" fill="#5c9a22"/>
<rect x="12.2" y="18.4" width="7.7" height="10.8" fill="#f6f6f6" stroke="#d0d0d0" stroke-width=".6"/><path d="M16 18.6 V29" stroke="#dedede" stroke-width=".5"/><circle cx="18.4" cy="23.6" r=".55" fill="#8a8a8a"/>
<rect x="10" y="29.2" width="12" height="1.1" fill="#3a3a3a"/>
<ellipse cx="4.4" cy="28.2" rx="3.3" ry="2.6" fill="#4a8a1c"/><ellipse cx="8.2" cy="29" rx="2.2" ry="1.8" fill="#3c7816"/><ellipse cx="3.8" cy="27.4" rx="1.6" ry="1.2" fill="#6aa838"/>
<ellipse cx="26.4" cy="28.2" rx="3.4" ry="2.7" fill="#4a8a1c"/><ellipse cx="22.4" cy="29.2" rx="2.2" ry="1.6" fill="#3c7816"/><ellipse cx="27" cy="27.4" rx="1.6" ry="1.2" fill="#6aa838"/></svg>
<span class="t" id="t36" style="top:157px;font-size:13px;line-height:16px;height:16px;color:#000;font-weight:bold;letter-spacing:-0.318px;left:257.5px;">Neue Immobilie erzeugen</span>
<div style="left:422px;top:162px;width:166px;height:1px;background:#808080"></div>
<div style="left:422px;top:163px;width:166px;height:1px;background:#fff"></div>
<div class="btn" style="left:597px;top:147px;width:81px;height:23px;"><i></i></div>
<svg class="a" style="left:604px;top:150px" width="16" height="16" viewBox="0 0 16 16"><defs><linearGradient id="g11" x1="0" y1="0" x2="1" y2="1"><stop offset="0" stop-color="#7be05a"/><stop offset="1" stop-color="#1f9a18"/></linearGradient></defs>
<path d="M.8 8.6 L3.2 6.6 L6 9.6 L13.4 1.8 L15.4 3.6 L6.2 14.2 Z" fill="url(#g11)" stroke="#1c7a14" stroke-width=".7" stroke-linejoin="round"/></svg>
<span class="t" id="t37" style="top:152px;font-size:11px;line-height:13px;height:13px;color:#000;letter-spacing:-0.286px;left:624px;">Speichern</span>
<div class="btn" style="left:684px;top:147px;width:77px;height:23px;"><i></i></div>
<svg class="a" style="left:691px;top:150px" width="16" height="16" viewBox="0 0 16 16"><path d="M7.9 1.6 L15 8.7 H.8 Z" fill="#f2f2f2"/><rect x="1.3" y="8.7" width="13.4" height="7" fill="#f2f2f2"/>
<rect x="1" y="8.3" width="14" height="1" fill="#b0b0b0"/>
<path d="M.2 8.9 L7.9 1.3 L15.8 8.9" fill="none" stroke="#8e8e8e" stroke-width="1.25"/>
<rect x="7" y="4.9" width="1.9" height="2" fill="#7c7c7c"/>
<rect x="3" y="9.6" width="1.9" height="2.4" fill="#7c7c7c"/><rect x="2.9" y="12" width="2.1" height="1.1" fill="#9c9c9c"/>
<rect x="11.1" y="9.6" width="1.9" height="2.4" fill="#7c7c7c"/><rect x="11" y="12" width="2.1" height="1.1" fill="#9c9c9c"/>
<rect x="6.4" y="9.7" width="3.3" height="5.6" fill="#f0f0f2" stroke="#a8a8ac" stroke-width=".6"/>
<path d="M1 15.7 C1.2 13.6 3.4 13.3 4.4 14 C5 14 5.6 14.6 5.8 15.7 Z M10.2 15.7 C10.4 14.6 11 14 11.6 14 C12.6 13.3 14.8 13.6 15 15.7 Z" fill="#9c9c9c"/>
<rect x="5.6" y="15.3" width="5" height=".6" fill="#707070"/></svg>
<span class="t" id="t38" style="top:152px;font-size:11px;line-height:13px;height:13px;color:#808080;text-shadow:1px 1px 0 #fff;letter-spacing:-0.254px;left:711px;">Aktionen</span>
<div class="btn" style="left:767px;top:147px;width:55px;height:23px;"><i></i></div>
<svg class="a" style="left:774px;top:150px" width="16" height="16" viewBox="0 0 16 16"><circle cx="8" cy="8.5" r="5.4" fill="none" stroke="#f0561c" stroke-width="3.9"/>
<circle cx="8" cy="8.5" r="5.4" fill="none" stroke="#fdf3ee" stroke-width="3.9" stroke-dasharray="2.9 5.58" stroke-dashoffset="-2.8"/>
<circle cx="8" cy="8.5" r="7.35" fill="none" stroke="#c8431a" stroke-width=".5" opacity=".55"/>
<circle cx="8" cy="8.5" r="3.45" fill="none" stroke="#c8431a" stroke-width=".5" opacity=".55"/></svg>
<span class="t" id="t39" style="top:152px;font-size:11px;line-height:13px;height:13px;color:#000;letter-spacing:-0.243px;left:794px;">Hilfe</span>
<div class="btn" style="left:828px;top:147px;width:79px;height:23px;"><i></i></div>
<svg class="a" style="left:835px;top:150px" width="16" height="16" viewBox="0 0 16 16"><defs><linearGradient id="g12" x1="0" y1="0" x2="0" y2="1"><stop offset="0" stop-color="#ff8a8a"/><stop offset=".22" stop-color="#f01818"/><stop offset=".5" stop-color="#c80000"/><stop offset=".8" stop-color="#e80808"/><stop offset="1" stop-color="#f02020"/></linearGradient></defs>
<path d="M3.3 3.5 L12.7 12.9 M12.7 3.5 L3.3 12.9" fill="none" stroke="url(#g12)" stroke-width="4.2" stroke-linecap="round"/>
<path d="M3.3 3.5 L12.7 12.9 M12.7 3.5 L3.3 12.9" fill="none" stroke="#a00000" stroke-opacity=".25" stroke-width="4.9" stroke-linecap="round"/></svg>
<span class="t" id="t40" style="top:152px;font-size:11px;line-height:13px;height:13px;color:#000;letter-spacing:-0.323px;left:855px;">Schließen</span>
<div style="left:222px;top:185px;width:684px;height:1px;background:#fff"></div>
<div style="left:288px;top:205px;width:1px;height:436px;background:#fff"></div>
<div style="left:905px;top:185px;width:1px;height:457px;background:#808080"></div>
<div style="left:906px;top:185px;width:1px;height:458px;background:#404040"></div>
<div style="left:288px;top:641px;width:618px;height:1px;background:#808080"></div>
<div style="left:288px;top:642px;width:619px;height:1px;background:#404040"></div>
<div style="left:222px;top:187px;width:1px;height:16px;background:#fff"></div>
<div style="left:222px;top:185px;width:2px;height:1px;background:#d4d0c8"></div>
<div style="left:223px;top:186px;width:1px;height:1px;background:#fff"></div>
<div style="left:224px;top:203px;width:64px;height:1px;background:#808080"></div>
<div style="left:224px;top:204px;width:64px;height:1px;background:#404040"></div>
<div class="t" style="top:189px;font-size:11px;line-height:13px;height:13px;color:#000;letter-spacing:-0.456px;left:104.19999999999999px;width:300px;text-align:center;"><span id="t41">Allgemein</span></div>
<div style="left:225px;top:205px;width:63px;height:16px;border-top:1px solid #fff;border-left:1px solid #fff;border-radius:3px 0 0 3px;"><div style="left:1px;right:0;bottom:1px;height:1px;background:#808080"></div><div style="left:1px;right:0;bottom:0;height:1px;background:#404040"></div></div>
<div class="t" style="top:206px;font-size:11px;line-height:13px;height:13px;color:#000;letter-spacing:-0.510px;left:105.5px;width:300px;text-align:center;"><span id="t42">Immobilie</span></div>
<div style="left:225px;top:221px;width:63px;height:17px;border-top:1px solid #fff;border-left:1px solid #fff;border-radius:3px 0 0 3px;"><div style="left:1px;right:0;bottom:1px;height:1px;background:#808080"></div><div style="left:1px;right:0;bottom:0;height:1px;background:#404040"></div></div>
<div class="t" style="top:223px;font-size:11px;line-height:13px;height:13px;color:#808080;text-shadow:1px 1px 0 #fff;letter-spacing:0.379px;left:105.5px;width:300px;text-align:center;"><span id="t43">Texte</span></div>
<div style="left:225px;top:238px;width:63px;height:17px;border-top:1px solid #fff;border-left:1px solid #fff;border-radius:3px 0 0 3px;"><div style="left:1px;right:0;bottom:1px;height:1px;background:#808080"></div><div style="left:1px;right:0;bottom:0;height:1px;background:#404040"></div></div>
<div class="t" style="top:240px;font-size:11px;line-height:13px;height:13px;color:#000;letter-spacing:-0.241px;left:105.5px;width:300px;text-align:center;"><span id="t44">Galerie</span></div>
<div style="left:225px;top:255px;width:63px;height:17px;border-top:1px solid #fff;border-left:1px solid #fff;border-radius:3px 0 0 3px;"><div style="left:1px;right:0;bottom:1px;height:1px;background:#808080"></div><div style="left:1px;right:0;bottom:0;height:1px;background:#404040"></div></div>
<div class="t" style="top:257px;font-size:11px;line-height:13px;height:13px;color:#000;letter-spacing:-0.152px;left:105.5px;width:300px;text-align:center;"><span id="t45">Mitarbeiter</span></div>
<div style="left:225px;top:272px;width:63px;height:17px;border-top:1px solid #fff;border-left:1px solid #fff;border-radius:3px 0 0 3px;"><div style="left:1px;right:0;bottom:1px;height:1px;background:#808080"></div><div style="left:1px;right:0;bottom:0;height:1px;background:#404040"></div></div>
<div class="t" style="top:274px;font-size:11px;line-height:13px;height:13px;color:#808080;text-shadow:1px 1px 0 #fff;letter-spacing:-0.098px;left:105.5px;width:300px;text-align:center;"><span id="t46">Exporte</span></div>
<div style="left:225px;top:289px;width:63px;height:17px;border-top:1px solid #fff;border-left:1px solid #fff;border-radius:3px 0 0 3px;"><div style="left:1px;right:0;bottom:1px;height:1px;background:#808080"></div><div style="left:1px;right:0;bottom:0;height:1px;background:#404040"></div></div>
<div class="t" style="top:291px;font-size:11px;line-height:13px;height:13px;color:#808080;text-shadow:1px 1px 0 #fff;letter-spacing:-0.082px;left:105.5px;width:300px;text-align:center;"><span id="t47">Adressen</span></div>
<div style="left:225px;top:306px;width:63px;height:17px;border-top:1px solid #fff;border-left:1px solid #fff;border-radius:3px 0 0 3px;"><div style="left:1px;right:0;bottom:1px;height:1px;background:#808080"></div><div style="left:1px;right:0;bottom:0;height:1px;background:#404040"></div></div>
<div class="t" style="top:308px;font-size:11px;line-height:13px;height:13px;color:#808080;text-shadow:1px 1px 0 #fff;letter-spacing:-0.265px;left:105.5px;width:300px;text-align:center;"><span id="t48">Kalender</span></div>
<div style="left:225px;top:323px;width:63px;height:17px;border-top:1px solid #fff;border-left:1px solid #fff;border-radius:3px 0 0 3px;"><div style="left:1px;right:0;bottom:1px;height:1px;background:#808080"></div><div style="left:1px;right:0;bottom:0;height:1px;background:#404040"></div></div>
<div class="t" style="top:325px;font-size:11px;line-height:13px;height:13px;color:#000;letter-spacing:-0.120px;left:105.5px;width:300px;text-align:center;"><span id="t49">Notizen</span></div>
<span class="t" id="t50" style="top:199px;font-size:11px;line-height:13px;height:13px;color:#000;font-weight:bold;letter-spacing:0.041px;left:301px;">Eckdaten</span>
<div style="left:356.5px;top:204px;width:536.5px;height:1px;background:#808080"></div>
<div style="left:356.5px;top:205px;width:536.5px;height:1px;background:#fff"></div>
<span class="t" id="t51" style="top:218px;font-size:11px;line-height:13px;height:13px;color:#000;letter-spacing:-0.286px;right:572.586px;">Titel:</span>
<div class="sunk" style="left:367px;top:217px;width:526px;height:21px;background:#bdfccf;"><i></i></div>
<span class="t" id="t52" style="top:221px;font-size:11px;line-height:13px;height:13px;color:#000;letter-spacing:-0.249px;left:370.5px;">Kleine Wohnung am Rande Berlins</span>
<span class="t" id="t53" style="top:244px;font-size:11px;line-height:13px;height:13px;color:#000;letter-spacing:-0.040px;right:572.340px;">Objekt-Nr:</span>
<div class="sunk" style="left:367px;top:243px;width:228px;height:21px;background:#fff;"><i></i></div>
<span class="t" id="t54" style="top:247px;font-size:11px;line-height:13px;height:13px;color:#000;letter-spacing:-0.164px;left:370.5px;">123456</span>
<span class="t" id="t55" style="top:270px;font-size:11px;line-height:13px;height:13px;color:#000;letter-spacing:0.033px;right:572.267px;">Objekt-ID:</span>
<div class="sunk" style="left:367px;top:269px;width:228px;height:21px;background:#d4d0c8;"><i></i></div>
<span class="t" id="t56" style="top:273px;font-size:11px;line-height:13px;height:13px;color:#808080;letter-spacing:-0.170px;left:370.5px;">Wird automatisch beim Speichern erzeugt...</span>
<span class="t" id="t57" style="top:296px;font-size:11px;line-height:13px;height:13px;color:#000;letter-spacing:0.000px;right:572.300px;">Import-ID:</span>
<div class="sunk" style="left:367px;top:295px;width:228px;height:21px;background:#d4d0c8;"><i></i></div>
<span class="t" id="t58" style="top:299px;font-size:11px;line-height:13px;height:13px;color:#808080;letter-spacing:-0.089px;left:370.5px;">Wird ggf. beim Datenimport erzeugt...</span>
<span class="t" id="t59" style="top:323px;font-size:11px;line-height:13px;height:13px;color:#000;letter-spacing:-0.043px;right:572.343px;">Keywords:</span>
<div class="sunk" style="left:367px;top:322px;width:228px;height:21px;background:#fff;"><i></i></div>
<span class="t" id="t60" style="top:244px;font-size:11px;line-height:13px;height:13px;color:#000;letter-spacing:0.018px;right:274.182px;">Währung:</span>
<div class="sunk" style="left:665px;top:243px;width:228px;height:21px;background:#fff;"><i></i><div style="left:1px;top:1px;right:17px;bottom:1px;background:#fff"><div style="left:2px;top:1px;right:1px;bottom:2px;background:#bdfccf"></div></div><div class="btn b2" style="right:1px;top:1px;width:16px;height:17px"><i></i><svg class="a" style="left:3px;top:5px" width="7" height="4"><path d="M0 0 H7 L3.5 3.8 Z" fill="#000"/></svg></div></div>
<span class="t" id="t61" style="top:247px;font-size:11px;line-height:13px;height:13px;color:#000;left:669px;">€</span>
<span class="t" id="t62" style="top:270px;font-size:11px;line-height:13px;height:13px;color:#000;letter-spacing:-0.011px;right:274.211px;">Status:</span>
<div class="sunk" style="left:665px;top:269px;width:228px;height:21px;background:#fff;"><i></i><div style="left:1px;top:1px;right:17px;bottom:1px;background:#fff"><div style="left:2px;top:1px;right:1px;bottom:2px;background:#bdfccf"></div></div><div class="btn b2" style="right:1px;top:1px;width:16px;height:17px"><i></i><svg class="a" style="left:3px;top:5px" width="7" height="4"><path d="M0 0 H7 L3.5 3.8 Z" fill="#000"/></svg></div></div>
<span class="t" id="t63" style="top:273px;font-size:11px;line-height:13px;height:13px;color:#000;letter-spacing:-0.209px;left:671.5px;">2. in Vermittlung</span>
<span class="t" id="t64" style="top:297px;font-size:11px;line-height:13px;height:13px;color:#000;letter-spacing:-0.190px;right:274.390px;">gültig von:</span>
<div style="left:665px;top:295px;width:209px;height:22px;background:#fff;border:1px solid #808080"></div>
<div class="btn" style="left:874px;top:295px;width:19px;height:22px;"><i></i><svg class="a" style="left:5px;top:7px" width="7" height="4"><path d="M0 0 H7 L3.5 3.8 Z" fill="#000"/></svg></div>
<span class="t" id="t65" style="top:300px;font-size:11px;line-height:13px;height:13px;color:#000;letter-spacing:0.014px;left:668.5px;">03.08.2009</span>
<span class="t" id="t66" style="top:324px;font-size:11px;line-height:13px;height:13px;color:#000;letter-spacing:-0.281px;right:274.481px;">gültig bis:</span>
<div style="left:665px;top:322px;width:209px;height:22px;background:#fff;border:1px solid #808080"></div>
<div class="btn" style="left:874px;top:322px;width:19px;height:22px;"><i></i><svg class="a" style="left:5px;top:7px" width="7" height="4"><path d="M0 0 H7 L3.5 3.8 Z" fill="#000"/></svg></div>
<span class="t" id="t67" style="top:327px;font-size:11px;line-height:13px;height:13px;color:#000;letter-spacing:0.014px;left:668.5px;">30.09.2009</span>
<span class="t" id="t68" style="top:355px;font-size:11px;line-height:13px;height:13px;color:#000;font-weight:bold;letter-spacing:-0.003px;left:301px;">Anschrift</span>
<div style="left:355.5px;top:360px;width:537.5px;height:1px;background:#808080"></div>
<div style="left:355.5px;top:361px;width:537.5px;height:1px;background:#fff"></div>
<span class="t" id="t69" style="top:378px;font-size:11px;line-height:13px;height:13px;color:#000;letter-spacing:-0.096px;right:573.396px;">Straße:</span>
<div class="sunk" style="left:366px;top:374px;width:457px;height:21px;background:#fff;"><i></i></div>
<span class="t" id="t70" style="top:378px;font-size:11px;line-height:13px;height:13px;color:#000;letter-spacing:-0.311px;left:370px;">Beispielstraße</span>
<span class="t" id="t71" style="top:378px;font-size:11px;line-height:13px;height:13px;color:#000;letter-spacing:0.230px;right:91.770px;">Nr:</span>
<div class="sunk" style="left:848px;top:374px;width:45px;height:21px;background:#fff;"><i></i></div>
<span class="t" id="t72" style="top:378px;font-size:11px;line-height:13px;height:13px;color:#000;letter-spacing:-0.197px;left:852px;">123</span>
<span class="t" id="t73" style="top:404px;font-size:11px;line-height:13px;height:13px;color:#000;letter-spacing:-0.198px;right:573.498px;">PLZ:</span>
<div class="sunk" style="left:366px;top:400px;width:45px;height:21px;background:#bdfccf;"><i></i></div>
<span class="t" id="t74" style="top:404px;font-size:11px;line-height:13px;height:13px;color:#000;letter-spacing:-0.337px;left:370.5px;">12345</span>
<span class="t" id="t75" style="top:404px;font-size:11px;line-height:13px;height:13px;color:#000;letter-spacing:0.180px;right:498.120px;">Ort:</span>
<div class="sunk" style="left:441px;top:400px;width:452px;height:21px;background:#bdfccf;"><i></i></div>
<span class="t" id="t76" style="top:404px;font-size:11px;line-height:13px;height:13px;color:#000;letter-spacing:0.011px;left:444.5px;">Berlin</span>
<span class="t" id="t77" style="top:430px;font-size:11px;line-height:13px;height:13px;color:#000;letter-spacing:-0.156px;right:573.456px;">Ortsteil:</span>
<div class="sunk" style="left:366px;top:426px;width:527px;height:21px;background:#fff;"><i></i></div>
<span class="t" id="t78" style="top:456px;font-size:11px;line-height:13px;height:13px;color:#000;letter-spacing:-0.234px;right:573.534px;">Land:</span>
<div class="sunk" style="left:366px;top:452px;width:527px;height:21px;background:#fff;"><i></i><div style="left:1px;top:1px;right:17px;bottom:1px;background:#fff"><div style="left:2px;top:1px;right:1px;bottom:2px;background:#bdfccf"></div></div><div class="btn b2" style="right:1px;top:1px;width:16px;height:17px"><i></i><svg class="a" style="left:3px;top:5px" width="7" height="4"><path d="M0 0 H7 L3.5 3.8 Z" fill="#000"/></svg></div></div>
<span class="t" id="t79" style="top:457px;font-size:10px;line-height:12px;height:12px;color:#000;letter-spacing:-0.106px;left:369.5px;">Deutschland</span>
<span class="t" id="t80" style="top:482px;font-size:11px;line-height:13px;height:13px;color:#000;letter-spacing:-0.053px;right:573.353px;">Region:</span>
<div class="sunk" style="left:366px;top:478px;width:527px;height:21px;background:#fff;"><i></i></div>
<div class="sunk" style="left:367px;top:506px;width:13px;height:13px;background:#fff;"><i></i></div>
<div style="left:384px;top:506px;width:322px;height:14px;border:1px dotted #000"></div>
<span class="t" id="t81" style="top:507px;font-size:11px;line-height:13px;height:13px;color:#000;letter-spacing:-0.085px;left:384.2px;">Straße &amp; Haus-Nr veröffentlichen (z.B. auf Exposés, Portalen etc.)</span>
<span class="t" id="t82" style="top:534px;font-size:11px;line-height:13px;height:13px;color:#000;font-weight:bold;letter-spacing:0.093px;left:301px;">Geo-Koordinaten</span>
<div style="left:400.5px;top:539px;width:492.5px;height:1px;background:#808080"></div>
<div style="left:400.5px;top:540px;width:492.5px;height:1px;background:#fff"></div>
<span class="t" id="t83" style="top:553px;font-size:11px;line-height:13px;height:13px;color:#000;letter-spacing:-0.203px;right:572.503px;">Längengrad:</span>
<div class="sunk" style="left:367px;top:552px;width:228px;height:21px;background:#fff1bf;"><i></i></div>
<span class="t" id="t84" style="top:556px;font-size:11px;line-height:13px;height:13px;color:#808080;left:371px;">0</span>
<span class="t" id="t85" style="top:553px;font-size:11px;line-height:13px;height:13px;color:#000;letter-spacing:-0.120px;right:273.920px;">Breitengrad:</span>
<div class="sunk" style="left:665px;top:552px;width:228px;height:21px;background:#fff1bf;"><i></i></div>
<span class="t" id="t86" style="top:556px;font-size:11px;line-height:13px;height:13px;color:#808080;left:669px;">0</span>
<div class="sunk" style="left:367px;top:581px;width:13px;height:13px;background:#fff;"><i></i></div>
<span class="t" id="t87" style="top:582px;font-size:11px;line-height:13px;height:13px;color:#000;letter-spacing:-0.216px;left:384px;">Geokoordinaten aktivieren</span>
</body></html>
